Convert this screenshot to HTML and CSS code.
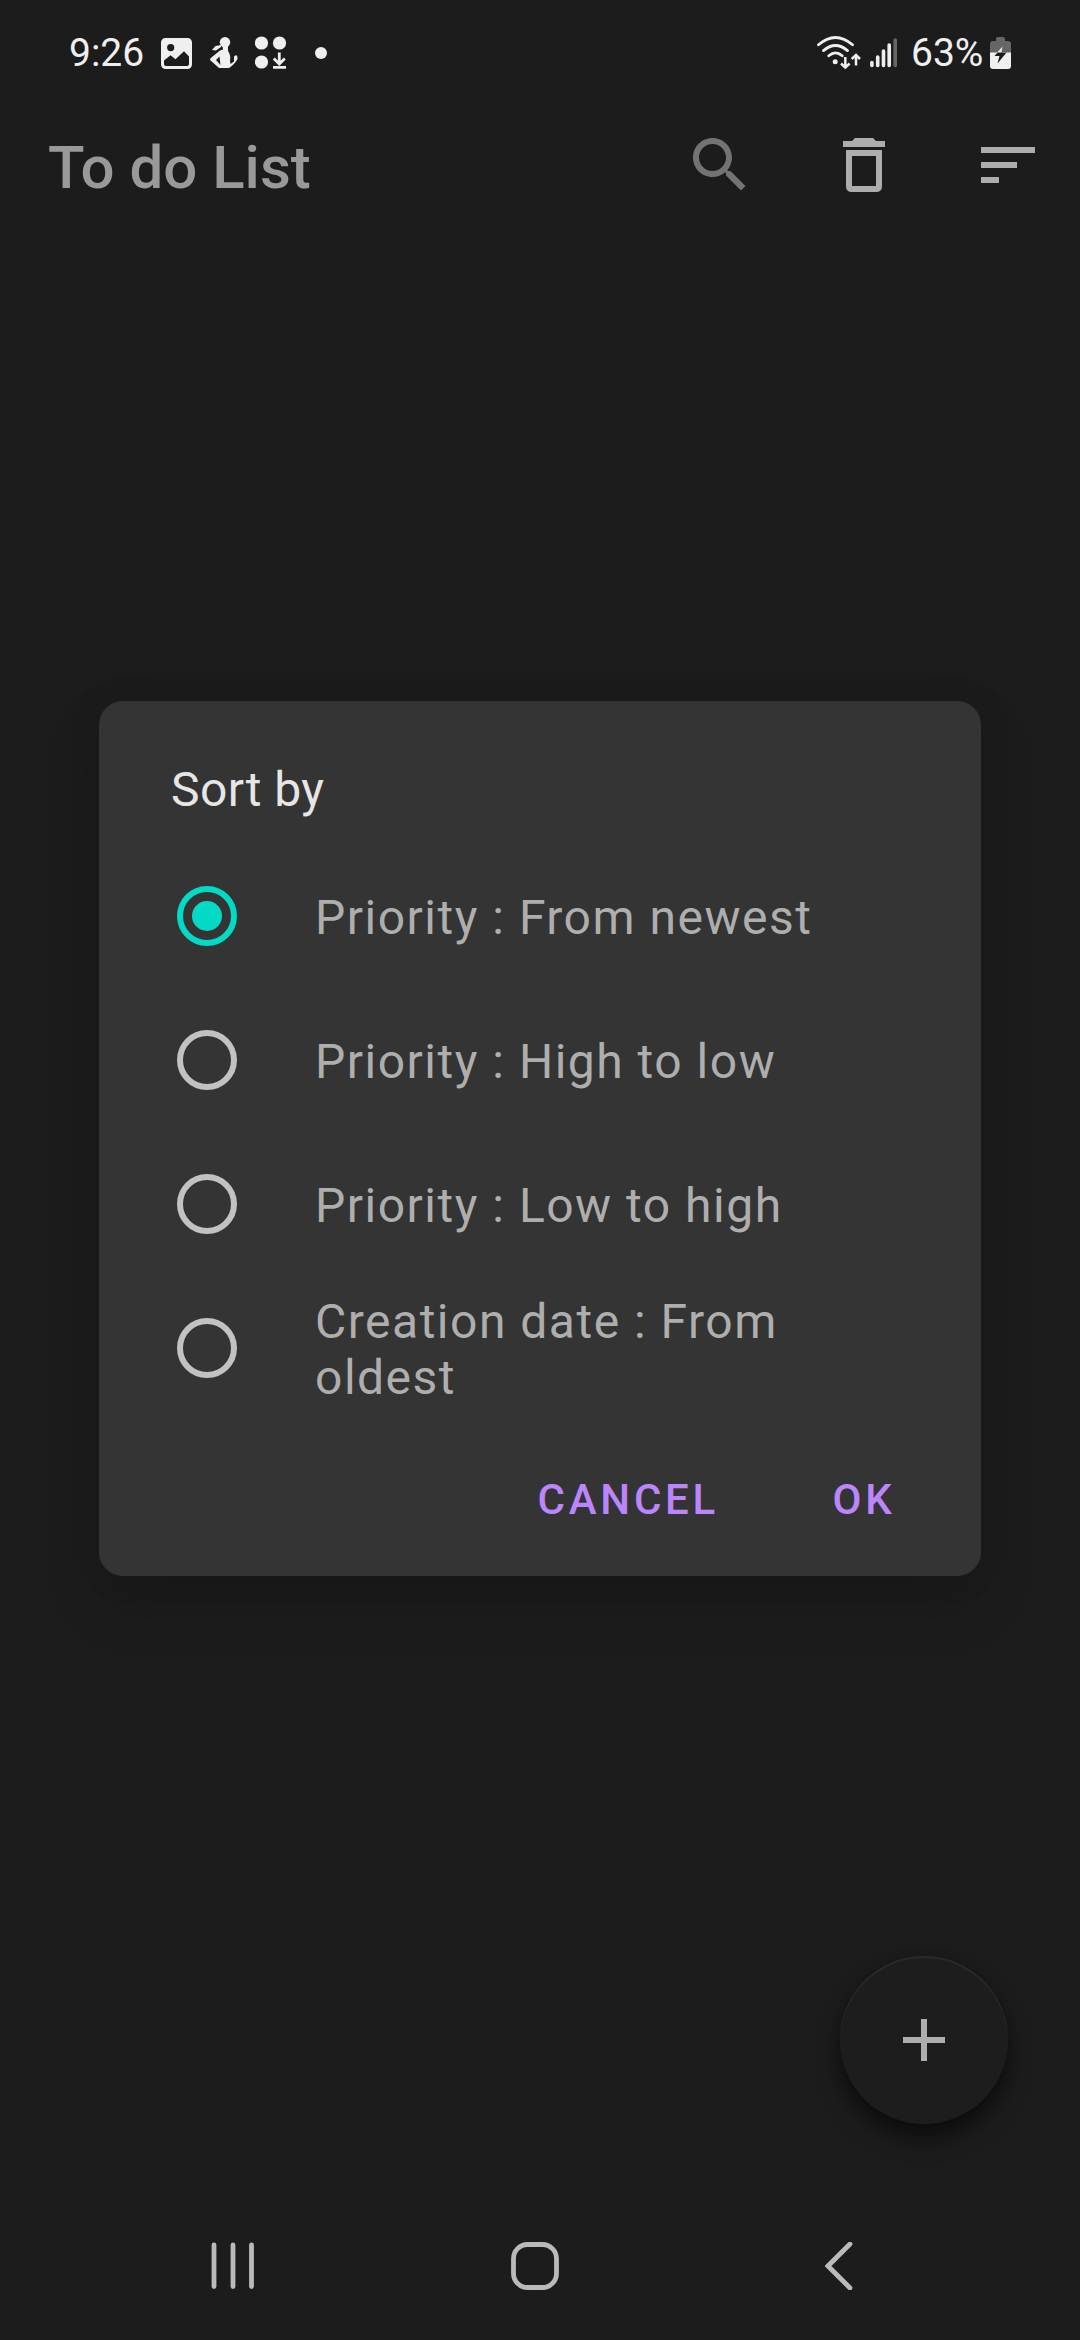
FILE: index.html
```html
<!DOCTYPE html>
<html lang="en">
<head>
<meta charset="utf-8">
<title>To do List</title>
<link rel="stylesheet" href="styles.css">
</head>
<body>
<div class="screen">
  <header class="status-bar">
    <div class="status-left">
      <span class="clock">9:26</span>
      <svg class="icon-gallery" width="31" height="31" viewBox="0 0 31 31">
        <path fill-rule="evenodd" d="M4.500 0H26.500A4.500 4.500 0 0 1 31 4.500V26.500A4.500 4.500 0 0 1 26.500 31H4.500A4.500 4.500 0 0 1 0 26.500V4.500A4.500 4.500 0 0 1 4.500 0ZM9.700 6A3.600 3.600 0 1 0 9.700 13.200A3.600 3.600 0 1 0 9.700 6ZM3 22.500V26Q3 28 5 28H26Q28 28 28 26V18.500L23 13.200L14.500 21.300L9.500 17.200Z"/>
      </svg>
      <svg class="icon-figure" width="28" height="32" viewBox="0 0 28 32">
        <circle cx="15" cy="5.200" r="5.200"/>
        <path d="M12.500 8H18V14Q21 18 20 24L20.500 27L24 24.500V19.500L26 18Q28 19 27.500 22Q25 27 19 31H9L0 23Q0 21 2 20L10 13.500L13 12.500ZM6 23L10.500 28L9.500 19.500Z" fill-rule="evenodd"/>
        <path d="M11 8L5.500 9L2 13L6 13.500L11 10Z"/>
      </svg>
      <svg class="icon-apps" width="32" height="34" viewBox="0 0 32 34">
        <circle cx="6.500" cy="7" r="6.600"/><circle cx="24.500" cy="7" r="6.600"/><circle cx="6.500" cy="26" r="6.600"/>
        <path class="line" d="M24.300 16.500V28M18.800 22.500L24.300 28L29.800 22.500M18 31.300H31" stroke-width="2.800"/>
      </svg>
      <span class="more-dot"></span>
    </div>
    <div class="status-right">
      <svg class="icon-wifi" width="44" height="34" viewBox="0 0 44 34">
        <path class="line" stroke-linecap="round" stroke-width="2.800" d="M1.500 8.800Q18.500-5.800 35.500 8.800M6.500 14.600Q18.500 4.500 30.500 14.600M11.800 19.800Q18.500 14 25.200 19.800"/>
        <circle cx="18.200" cy="25.800" r="2.500"/>
        <path class="line" stroke-width="2.500" d="M28.300 21V31.500M24 27.500L28.300 31.500L32.600 27.500M39 29.500V19M34.700 23L39 19L43 23"/>
      </svg>
      <svg class="icon-signal" width="28" height="30" viewBox="0 0 28 30">
        <g class="line" stroke-linecap="round" stroke-width="3.600">
          <path d="M1.900 24.500V27.500M7.700 19V27.500M13.500 13V27.500M19.200 7V27.500"/><path class="dim-line" d="M25.200 2V27.500"/>
        </g>
      </svg>
      <span class="percent">63%</span>
      <svg class="icon-battery" width="21" height="32" viewBox="0 0 21 32">
        <path class="dim" d="M6 2Q6 0 8 0H13Q15 0 15 2V4H18Q21 4 21 7V16H0V7Q0 4 3 4H6Z"/>
        <path d="M0 15.500H21V29Q21 32 18 32H3Q0 32 0 29Z"/>
        <path class="bolt-top" d="M12.500 9.500L4.500 18.500H9L16 15.500H11.500Z"/>
        <path class="bolt" d="M7.500 15.500L4.500 19H9.500L7.500 26.500L16.500 15.500Z"/>
      </svg>
    </div>
  </header>

  <nav class="toolbar">
    <h1>To do List</h1>
    <button class="tool search" aria-label="Search"><svg viewBox="0 0 24 24"><path d="M15.500 14h-.79l-.28-.27C15.410 12.590 16 11.110 16 9.500 16 5.910 13.090 3 9.500 3S3 5.910 3 9.500 5.910 16 9.500 16c1.610 0 3.090-.59 4.230-1.570l.27.28v.79l5 4.990L20.490 19l-4.990-5zm-6 0C7.010 14 5 11.990 5 9.500S7.010 5 9.500 5 14 7.010 14 9.500 11.990 14 9.500 14z"/></svg></button>
    <button class="tool" aria-label="Delete"><svg viewBox="0 0 24 24"><path fill-rule="evenodd" d="M9 3H15L16 4H19V6H5V4H8ZM6 7H18V19Q18 21 16 21H8Q6 21 6 19ZM8 9V19H16V9Z"/></svg></button>
    <button class="tool" aria-label="Sort"><svg viewBox="0 0 24 24"><path d="M3 18h6v-2H3v2zM3 6v2h18V6H3zm0 7h12v-2H3v2z"/></svg></button>
  </nav>

  <main class="content">
    <section class="dialog">
      <h2>Sort by</h2>
      <ul class="options">
        <li><span class="radio checked"></span><span class="label">Priority : From newest</span></li>
        <li><span class="radio"></span><span class="label">Priority : High to low</span></li>
        <li><span class="radio"></span><span class="label">Priority : Low to high</span></li>
        <li><span class="radio"></span><span class="label">Creation date : From oldest</span></li>
      </ul>
      <div class="actions"><button>CANCEL</button><button>OK</button></div>
    </section>
    <button class="fab" aria-label="Add"><svg viewBox="0 0 24 24"><path d="M19 13h-6v6h-2v-6H5v-2h6V5h2v6h6v2z"/></svg></button>
  </main>

  <footer class="nav-bar">
    <svg class="recents" width="44" height="48" viewBox="0 0 44 48"><path d="M3 3V44.500M22 3V44.500M40.500 3V44.500"/></svg>
    <svg class="home" width="48" height="48" viewBox="0 0 48 48"><rect x="2.500" y="2.500" width="43" height="43" rx="14"/></svg>
    <svg class="back" width="28" height="48" viewBox="0 0 28 48"><path d="M25 2L3 24L25 46"/></svg>
  </footer>
</div>
</body>
</html>
```
FILE: styles.css
```css
* { box-sizing: border-box; }
body, h1, h2, ul { margin: 0; padding: 0; }
body { background: #1c1c1c; font-family: Roboto, sans-serif; }
button { border: 0; padding: 0; background: none; font: inherit; }
svg { display: block; flex: none; }

.screen {
  width: 1080px;
  height: 2340px;
  display: flex;
  flex-direction: column;
  overflow: hidden;
}

.status-bar {
  height: 81px;
  padding: 25px 69px 0 69px;
  display: flex;
  justify-content: space-between;
  align-items: flex-start;
  color: #efefef;
  fill: #efefef;
  font-size: 39px;
  line-height: 56px;
}
.status-left, .status-right { display: flex; align-items: center; height: 56px; }
.clock { width: 92px; }
.icon-figure { margin-left: 18px; }
.icon-apps { margin-left: 17px; }
.more-dot { width: 12px; height: 12px; border-radius: 50%; background: #efefef; margin-left: 28px; }
.icon-signal { margin-left: 9px; }
.percent { margin-left: 13px; width: 79px; }
.line { fill: none; stroke: #efefef; }
.dim-line { stroke: #666; }
.dim { fill: #666; }
.bolt-top { fill: #efefef; }
.bolt { fill: #1c1c1c; }

.toolbar {
  height: 168px;
  padding-left: 48px;
  display: flex;
  align-items: center;
  fill: #adadad;
}
.toolbar h1 { flex: 1; padding-top: 5px; font-size: 60px; font-weight: 500; line-height: 72px; color: #999; }
.tool { width: 144px; height: 144px; display: grid; place-items: center; }
.tool svg, .fab svg { width: 72px; height: 72px; }
.search { fill: #737373; }

.content {
  flex: 1;
  display: flex;
  flex-direction: column;
  justify-content: space-between;
  padding: 452px 72px 72px 99px;
}
.dialog {
  width: 882px;
  height: 875px;
  display: flex;
  flex-direction: column;
  border-radius: 24px;
  background: #343434;
  box-shadow: 0 28px 60px rgba(0, 0, 0, .14), 0 0 36px rgba(0, 0, 0, .08);
}
.dialog h2 {
  height: 143px;
  padding: 60px 72px 0;
  font-size: 48px;
  font-weight: 400;
  line-height: 57px;
  letter-spacing: .45px;
  color: #e6e6e6;
}
.options { list-style: none; }
.options li { height: 144px; padding: 0 72px 0 78px; display: flex; align-items: center; }
.radio { flex: none; width: 60px; height: 60px; border: 6px solid #c2c2c2; border-radius: 50%; }
.radio.checked { border-color: #03dac6; display: grid; place-items: center; }
.radio.checked::before { content: ""; width: 30px; height: 30px; border-radius: 50%; background: #03dac6; }
.label { margin-left: 78px; padding-top: 3px; font-size: 48px; line-height: 56px; letter-spacing: 1.5px; color: #aeaeae; }
.actions { flex: 1; padding: 3px 21px 0 24px; display: flex; justify-content: flex-end; align-items: center; gap: 25px; }
.actions button {
  min-width: 192px;
  height: 108px;
  padding: 0 24px;
  font-size: 42px;
  font-weight: 500;
  letter-spacing: 3.75px;
  color: #bb86fc;
}

.fab {
  align-self: flex-end;
  width: 168px;
  height: 168px;
  display: grid;
  place-items: center;
  border-radius: 50%;
  background: #1d1d1d;
  fill: #adadad;
  box-shadow: inset 0 2px 1px #2c2c2c, 0 15px 22px rgba(0, 0, 0, .5), 0 0 10px rgba(0, 0, 0, .15);
}

.nav-bar {
  height: 144px;
  padding: 0 228px 4px 211px;
  display: flex;
  align-items: center;
  fill: none;
  stroke: #bababa;
  stroke-width: 4.800;
  stroke-linecap: round;
}
.home { margin-left: 256px; }
.back { margin-left: 266px; }
```
